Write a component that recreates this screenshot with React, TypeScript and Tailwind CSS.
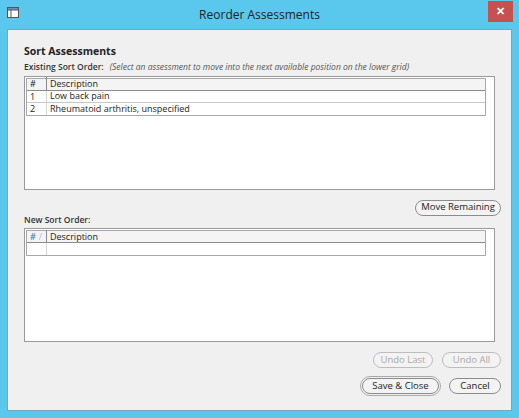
const font = { fontFamily: '"Segoe UI", "Open Sans", "Liberation Sans", sans-serif' };

function Grid({ rows, newOrder }: { rows: [string, string][]; newOrder?: boolean }) {
  return (
    <div className="mx-[16px] h-[114px] border border-[#9a9a9a] bg-white pt-[1px] pl-[1px]">
      <div className="w-[460px] border border-[#a8a8a8]">
        <div className="flex h-[12px] items-center border-b border-[#8a8a8a] bg-[#f4f4f4] text-[9px] text-[#222]">
          <div className="flex w-[20px] items-center gap-[3px] border-r border-[#8a8a8a] pl-[3px]">
            {newOrder ? (
              <>
                <span className="text-[#3a5ad8]">#</span>
                <span className="text-[#bbb]">/</span>
              </>
            ) : (
              <span>#</span>
            )}
          </div>
          <div className="pl-[3px]">Description</div>
        </div>
        {rows.map(([n, d], i) => (
          <div key={i} className="flex h-[12px] items-center border-b border-[#c8c8c8] text-[9px] text-[#222] last:border-b-0">
            <div className="h-full w-[20px] border-r border-[#d4d4d4] pl-[3px] leading-[12px]">{n}</div>
            <div className="pl-[3px]">{d}</div>
          </div>
        ))}
      </div>
    </div>
  );
}

function Btn({ children, w, disabled, def }: { children: string; w: number; disabled?: boolean; def?: boolean }) {
  return (
    <div
      style={{ width: w }}
      className={`flex h-[16px] items-center justify-center rounded-full border bg-[#f3f3f3] text-[9.5px] ${
        disabled ? 'border-[#bdbdbd] text-[#a8a8a8]' : 'border-[#8c8c8c] text-[#222]'
      } ${def ? 'outline outline-1 outline-offset-[1px] outline-[#aaa]' : ''}`}
    >
      {children}
    </div>
  );
}

export default function App() {
  return (
    <div style={font} className="h-[418px] w-[519px] bg-[#5ac8ec] p-[1px]">
      <div className="relative flex h-[28px] items-center justify-center">
        <svg className="absolute left-[6px] top-[6px]" width="12" height="11" viewBox="0 0 12 11">
          <rect x="0.5" y="0.5" width="11" height="10" fill="#fff" stroke="#555" />
          <rect x="0.5" y="0.5" width="11" height="2.5" fill="#6d8fc6" stroke="#555" />
          <line x1="4" y1="3" x2="4" y2="10.5" stroke="#555" />
        </svg>
        <span className="text-[12px] text-[#222]">Reorder Assessments</span>
        <div className="absolute right-[5px] top-0 flex h-[21px] w-[25px] items-center justify-center bg-[#c75050] text-[11px] font-bold text-white">
          ✕
        </div>
      </div>
      <div className="mx-[6px] flex h-[382px] flex-col border border-[#7aa6b8] bg-[#f0f0f0]">
        <div className="ml-[16px] mt-[14px] text-[10.5px] font-bold text-[#222]">Sort Assessments</div>
        <div className="mb-[2px] ml-[16px] mt-[1px] text-[8.5px] text-[#333]">
          <span className="font-semibold">Existing Sort Order:</span>
          <span className="ml-[6px] italic text-[#555]">(Select an assessment to move into the next available position on the lower grid)</span>
        </div>
        <Grid rows={[['1', 'Low back pain'], ['2', 'Rheumatoid arthritis, unspecified']]} />
        <div className="mr-[10px] mt-[10px] flex justify-end">
          <Btn w={86}>Move Remaining</Btn>
        </div>
        <div className="mb-[2px] ml-[16px] mt-[-2px] text-[8.5px] font-semibold text-[#333]">New Sort Order:</div>
        <Grid newOrder rows={[['', '']]} />
        <div className="mr-[10px] mt-[10px] flex justify-end gap-[9px]">
          <Btn w={60} disabled>Undo Last</Btn>
          <Btn w={59} disabled>Undo All</Btn>
        </div>
        <div className="mr-[10px] mt-[10px] flex justify-end gap-[10px]">
          <Btn w={77} def>Save &amp; Close</Btn>
          <Btn w={52}>Cancel</Btn>
        </div>
      </div>
    </div>
  );
}
